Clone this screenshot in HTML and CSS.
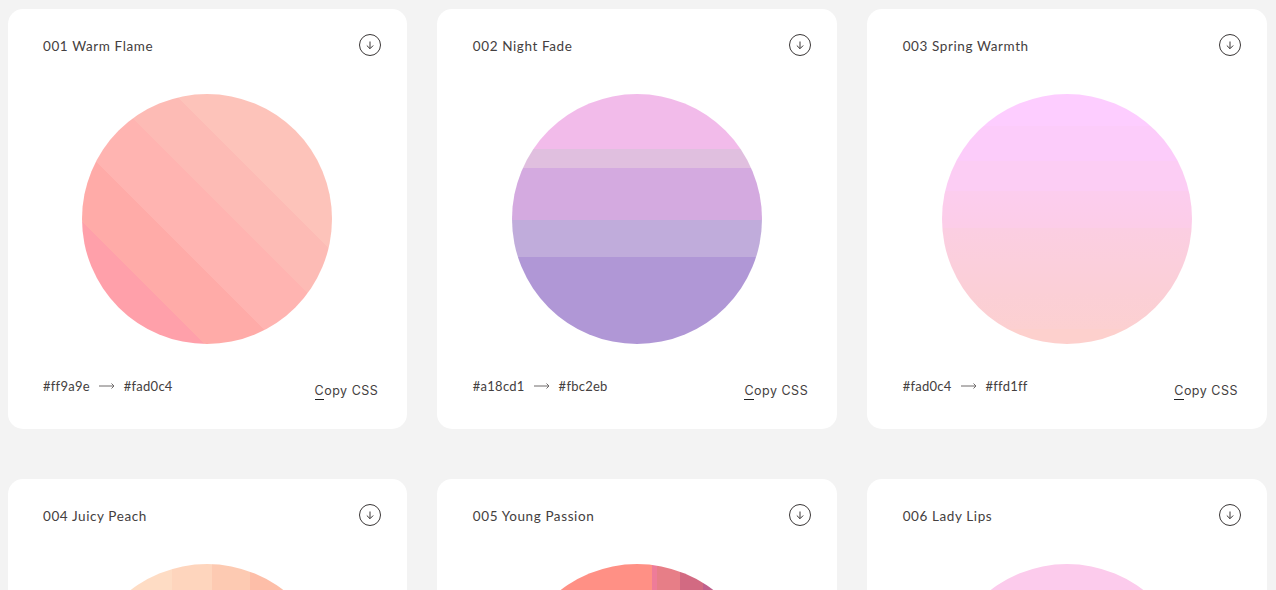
FILE: index.html
```html
<!DOCTYPE html>
<html lang="en">

<head>
    <title>Gradients</title>
    <link rel="stylesheet" href="styles.css">
</head>

<body>
    <div class="grid">
        <div class="card">
            <div class="card-top">
                <span class="name">001 Warm Flame</span>
                <svg class="download" width="22" height="22" viewBox="0 0 22 22"><circle cx="11" cy="11" r="10.5"/><path d="M11 7.5V14.5M7.8 11.5L11 14.7L14.2 11.5"/></svg>
            </div>
            <div class="circle warm-flame"></div>
            <div class="card-bottom">
                <div class="colors">
                    <span>#ff9a9e</span>
                    <svg class="arrow" width="16" height="8" viewBox="0 0 16 8"><path d="M0 4H15M12.5 1.5L15 4L12.5 6.5"/></svg>
                    <span>#fad0c4</span>
                </div>
                <span class="copy"><span class="first">C</span>opy CSS</span>
            </div>
        </div>

        <div class="card">
            <div class="card-top">
                <span class="name">002 Night Fade</span>
                <svg class="download" width="22" height="22" viewBox="0 0 22 22"><circle cx="11" cy="11" r="10.5"/><path d="M11 7.5V14.5M7.8 11.5L11 14.7L14.2 11.5"/></svg>
            </div>
            <div class="circle night-fade"></div>
            <div class="card-bottom">
                <div class="colors">
                    <span>#a18cd1</span>
                    <svg class="arrow" width="16" height="8" viewBox="0 0 16 8"><path d="M0 4H15M12.5 1.5L15 4L12.5 6.5"/></svg>
                    <span>#fbc2eb</span>
                </div>
                <span class="copy"><span class="first">C</span>opy CSS</span>
            </div>
        </div>

        <div class="card">
            <div class="card-top">
                <span class="name">003 Spring Warmth</span>
                <svg class="download" width="22" height="22" viewBox="0 0 22 22"><circle cx="11" cy="11" r="10.5"/><path d="M11 7.5V14.5M7.8 11.5L11 14.7L14.2 11.5"/></svg>
            </div>
            <div class="circle spring-warmth"></div>
            <div class="card-bottom">
                <div class="colors">
                    <span>#fad0c4</span>
                    <svg class="arrow" width="16" height="8" viewBox="0 0 16 8"><path d="M0 4H15M12.5 1.5L15 4L12.5 6.5"/></svg>
                    <span>#ffd1ff</span>
                </div>
                <span class="copy"><span class="first">C</span>opy CSS</span>
            </div>
        </div>

        <div class="card">
            <div class="card-top">
                <span class="name">004 Juicy Peach</span>
                <svg class="download" width="22" height="22" viewBox="0 0 22 22"><circle cx="11" cy="11" r="10.5"/><path d="M11 7.5V14.5M7.8 11.5L11 14.7L14.2 11.5"/></svg>
            </div>
            <div class="circle juicy-peach"></div>
        </div>

        <div class="card">
            <div class="card-top">
                <span class="name">005 Young Passion</span>
                <svg class="download" width="22" height="22" viewBox="0 0 22 22"><circle cx="11" cy="11" r="10.5"/><path d="M11 7.5V14.5M7.8 11.5L11 14.7L14.2 11.5"/></svg>
            </div>
            <div class="circle young-passion"></div>
        </div>

        <div class="card">
            <div class="card-top">
                <span class="name">006 Lady Lips</span>
                <svg class="download" width="22" height="22" viewBox="0 0 22 22"><circle cx="11" cy="11" r="10.5"/><path d="M11 7.5V14.5M7.8 11.5L11 14.7L14.2 11.5"/></svg>
            </div>
            <div class="circle lady-lips"></div>
        </div>
    </div>
</body>

</html>
```

FILE: styles.css
```css
html, body {
    height: 100%;
    overflow: hidden;
}

body {
    margin: 0;
    background-color: #f3f3f3;
    font-family: "Lato", "Open Sans", sans-serif;
    color: #444040;
}

.grid {
    display: grid;
    grid-template-columns: repeat(3, 1fr);
    gap: 50px 30px;
    padding: 9px 9px 0 7.5px;
}

.card {
    display: flex;
    flex-direction: column;
    height: 420px;
    box-sizing: border-box;
    background-color: #fff;
    border-radius: 15px;
}

.card-top {
    display: flex;
    justify-content: space-between;
    padding: 25px 26px 0 35.5px;
    height: 22px;
}

.name {
    font-size: 13.5px;
    line-height: 24px;
    letter-spacing: 0.6px;
}

.download {
    fill: none;
    stroke: #3a3636;
}

.circle {
    flex: none;
    width: 250px;
    height: 250px;
    margin: 38px auto 0;
    border-radius: 50%;
}

.card-bottom {
    display: flex;
    justify-content: space-between;
    padding: 0 29px 0 35.5px;
    margin-top: 27px;
}

.colors {
    display: flex;
    align-items: center;
    gap: 9px;
    height: 30px;
    font-size: 13px;
    letter-spacing: 0.25px;
}

.arrow {
    fill: none;
    stroke: #6f6b6b;
}

.copy {
    margin-top: 10px;
    font-family: "Inter", sans-serif;
    font-size: 12.5px;
    line-height: 20px;
    letter-spacing: 0.5px;
}

.first {
    display: inline-block;
    border-bottom: 1px solid #222;
    height: 18px;
}

.warm-flame {
    background: linear-gradient(45deg,
        #ffa0aa 24.4%, #ffaba8 24.4%, #ffaba8 39.3%,
        #ffb4b1 39.3%, #ffb4b1 55.2%, #fdbbb5 55.2%,
        #fdbbb5 68.4%, #fdc3ba 68.4%);
}

.night-fade {
    background: linear-gradient(180deg,
        #f2bbea 22%, #e0bfdf 22%, #e0bfdf 29.6%,
        #d4aae0 29.6%, #d4aae0 50.4%, #c0acdb 50.4%,
        #c0acdb 65.2%, #b097d6 65.2%);
}

.spring-warmth {
    background: linear-gradient(180deg,
        #fdcdff 13%, #fcccfa 13%, #fcccfa 27%,
        #fccdf4 27%, #fccdf4 39%, #fccdee 39%,
        #fccde8 53.5%, #fbcee2 53.5%, #fbcfdc 67.5%,
        #fbcfd6 80%, #fcd0d1 94%, #fdd0cd 94%);
}

.juicy-peach {
    background: linear-gradient(90deg,
        #fedcc4 36%, #fed5bd 36%, #fed5bd 52%,
        #fdcab2 52%, #fdcab2 67.2%, #fdbea8 67.2%);
}

.young-passion {
    background: linear-gradient(90deg,
        #ff9085 56%, #ee7c99 56%, #ee7c99 58%,
        #e77e87 58%, #e77e87 67.2%, #d26a82 67.2%,
        #d26a82 76.4%, #c0608c 76.4%);
}

.lady-lips {
    background-color: #fccbec;
}
```
